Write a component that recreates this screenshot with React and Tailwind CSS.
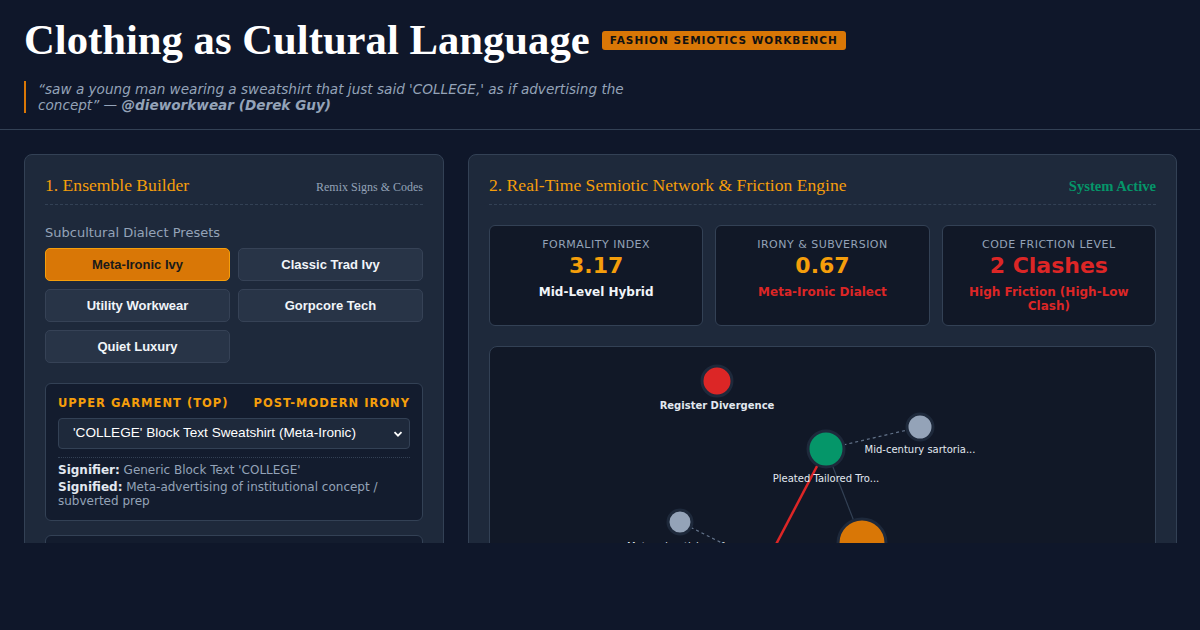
import React from "react";

const serif = { fontFamily: '"Liberation Serif", "Times New Roman", serif' };

function Preset({ label, active }) {
  return (
    <button
      className={
        "h-[33px] rounded-[5px] border text-[13px] font-bold font-['Liberation_Sans',Arial,sans-serif] " +
        (active
          ? "bg-[#d97706] border-[#f59e0b] text-[#1a1a1a]"
          : "bg-[#283447] border-[#364256] text-[#f1f5f9]")
      }
    >
      {label}
    </button>
  );
}

function Metric({ label, value, valueClass, sub, subClass }) {
  return (
    <div className="rounded-[6px] border border-[#334155] bg-[#111827] px-3 pt-3 pb-3 text-center">
      <div className="text-[11px] leading-[13px] tracking-[0.5px] text-[#94a3b8] uppercase">{label}</div>
      <div className={"mt-[3px] text-[22px] leading-[24px] font-bold " + valueClass}>{value}</div>
      <div className={"mt-[7px] text-[12px] leading-[14px] font-bold " + subClass}>{sub}</div>
    </div>
  );
}

function Network() {
  return (
    <svg width="665" height="400" className="block">
      {/* edges */}
      <line x1="336" y1="102" x2="248" y2="270" stroke="#dc2626" strokeWidth="2.5" />
      <line x1="336" y1="102" x2="372" y2="195" stroke="#334155" strokeWidth="1.2" />
      <line x1="336" y1="102" x2="430" y2="80" stroke="#64748b" strokeWidth="1.2" strokeDasharray="3 3" />
      <line x1="190" y1="175" x2="250" y2="205" stroke="#64748b" strokeWidth="1.2" strokeDasharray="3 3" />
      {/* nodes */}
      <circle cx="227" cy="34" r="15" fill="#dc2626" stroke="#1e293b" strokeWidth="3" />
      <text x="227" y="62" textAnchor="middle" fill="#e2e8f0" fontSize="10" fontWeight="bold" fontFamily="DejaVu Sans, sans-serif">Register Divergence</text>

      <circle cx="430" cy="80" r="13" fill="#94a3b8" stroke="#1e293b" strokeWidth="3" />
      <text x="430" y="106" textAnchor="middle" fill="#e2e8f0" fontSize="10" fontFamily="DejaVu Sans, sans-serif">Mid-century sartoria...</text>

      <circle cx="336" cy="102" r="18" fill="#059669" stroke="#1e293b" strokeWidth="3" />
      <text x="336" y="135" textAnchor="middle" fill="#e2e8f0" fontSize="10" fontFamily="DejaVu Sans, sans-serif">Pleated Tailored Tro...</text>

      <circle cx="190" cy="175" r="12" fill="#94a3b8" stroke="#1e293b" strokeWidth="3" />
      <text x="190" y="203" textAnchor="middle" fill="#e2e8f0" fontSize="10" fontFamily="DejaVu Sans, sans-serif">Meta-advertising of...</text>

      <circle cx="372" cy="196" r="24" fill="#d97706" stroke="#1e293b" strokeWidth="3" />
    </svg>
  );
}

export default function App() {
  return (
    <div className="w-full h-[630px] bg-[#0f172a] font-['DejaVu_Sans',sans-serif]">
      <div className="h-[543px] overflow-hidden">
        <header className="px-6 pt-[13px] pb-4 border-b border-[#334155]">
          <div className="flex items-center gap-3">
            <h1 className="text-[42.7px] leading-[54px] font-bold text-white" style={serif}>
              Clothing as Cultural Language
            </h1>
            <span className="rounded-[3px] bg-[#d97706] px-2 py-[3px] text-[10.5px] leading-[13px] font-bold tracking-[1px] text-[#111]">
              FASHION SEMIOTICS WORKBENCH
            </span>
          </div>
          <blockquote className="mt-[14px] max-w-[620px] border-l-2 border-[#d97706] pl-3 text-[13.6px] leading-[16px] italic text-[#94a3b8]">
            “saw a young man wearing a sweatshirt that just said 'COLLEGE,' as if advertising the concept” — <strong>@dieworkwear (Derek Guy)</strong>
          </blockquote>
        </header>

        <main className="grid grid-cols-[420px_1fr] gap-6 px-6 pt-6">
          {/* Left panel */}
          <section className="rounded-[8px] border border-[#334155] bg-[#1e293b] p-5 h-[600px]">
            <div className="flex h-[30px] items-baseline justify-between border-b border-dashed border-[#334155] pb-2">
              <h2 className="text-[17.6px] leading-[20px] text-[#f59e0b]" style={serif}>1. Ensemble Builder</h2>
              <span className="text-[12px] leading-[14px] text-[#94a3b8]" style={serif}>Remix Signs &amp; Codes</span>
            </div>
            <div className="mt-5 text-[13px] leading-[16px] text-[#94a3b8]">Subcultural Dialect Presets</div>
            <div className="mt-[7px] grid grid-cols-2 gap-2">
              <Preset label="Meta-Ironic Ivy" active />
              <Preset label="Classic Trad Ivy" />
              <Preset label="Utility Workwear" />
              <Preset label="Gorpcore Tech" />
              <Preset label="Quiet Luxury" />
            </div>

            <div className="mt-5 rounded-[6px] border border-[#334155] bg-[#131c2e] p-3">
              <div className="flex justify-between text-[11.5px] leading-[14px] font-bold tracking-[1px] text-[#f59e0b]">
                <span>UPPER GARMENT (TOP)</span>
                <span>POST-MODERN IRONY</span>
              </div>
              <div className="mt-2 relative h-[31px] rounded-[4px] border border-[#334155] bg-[#1e293b] flex items-center pl-[14px] text-[13.6px] text-white font-['Liberation_Sans',Arial,sans-serif]">
                'COLLEGE' Block Text Sweatshirt (Meta-Ironic)
                <svg className="absolute right-[6px] top-[10px]" width="10" height="10" viewBox="0 0 10 10">
                  <path d="M1.5 3.2 L5 6.7 L8.5 3.2" fill="none" stroke="white" strokeWidth="1.8" />
                </svg>
              </div>
              <div className="mt-2 border-t border-dotted border-[#334155] pt-[5px] text-[12px] leading-[14px] text-[#94a3b8]">
                <p><b className="text-[#e2e8f0]">Signifier:</b> Generic Block Text 'COLLEGE'</p>
                <p className="mt-[3px]"><b className="text-[#e2e8f0]">Signified:</b> Meta-advertising of institutional concept / subverted prep</p>
              </div>
            </div>

            <div className="mt-[14px] h-[120px] rounded-[6px] border border-[#334155] bg-[#131c2e]"></div>
          </section>

          {/* Right panel */}
          <section className="rounded-[8px] border border-[#334155] bg-[#1e293b] p-5 h-[600px]">
            <div className="flex h-[30px] items-baseline justify-between border-b border-dashed border-[#334155] pb-2">
              <h2 className="text-[17.6px] leading-[20px] text-[#f59e0b]" style={serif}>2. Real-Time Semiotic Network &amp; Friction Engine</h2>
              <span className="text-[14.6px] leading-[16px] font-bold text-[#059669]" style={serif}>System Active</span>
            </div>
            <div className="mt-5 grid grid-cols-3 gap-3">
              <Metric label="Formality Index" value="3.17" valueClass="text-[#f59e0b]" sub="Mid-Level Hybrid" subClass="text-[#f1f5f9]" />
              <Metric label="Irony & Subversion" value="0.67" valueClass="text-[#f59e0b]" sub="Meta-Ironic Dialect" subClass="text-[#dc2626]" />
              <Metric label="Code Friction Level" value="2 Clashes" valueClass="text-[#dc2626]" sub="High Friction (High-Low Clash)" subClass="text-[#dc2626]" />
            </div>
            <div className="mt-5 h-[400px] overflow-hidden rounded-[8px] border border-[#334155] bg-[#111827]">
              <Network />
            </div>
          </section>
        </main>
      </div>
    </div>
  );
}
